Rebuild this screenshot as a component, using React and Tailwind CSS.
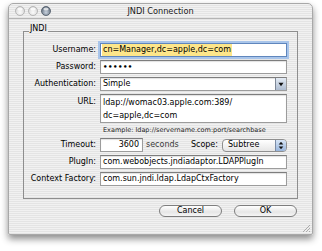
import React from "react";

const stripes =
  "bg-[repeating-linear-gradient(180deg,#f1f1f1_0px,#f1f1f1_1px,#e4e4e4_1px,#e4e4e4_2px)]";

function Light({ active }) {
  return (
    <svg width="10" height="10" viewBox="0 0 10 10">
      <defs>
        <radialGradient id={active ? "ga" : "gi"} cx="50%" cy="65%" r="60%">
          <stop offset="0%" stopColor={active ? "#c9d3df" : "#fbfbfb"} />
          <stop offset="100%" stopColor={active ? "#5e6b7b" : "#d6d6d6"} />
        </radialGradient>
      </defs>
      <circle cx="5" cy="5" r="4.5" fill={`url(#${active ? "ga" : "gi"})`} stroke={active ? "#4d5866" : "#a9a9a9"} strokeWidth="0.8" />
      <ellipse cx="5" cy="3" rx="2.6" ry="1.5" fill="#ffffff" opacity={active ? 0.7 : 0.8} />
    </svg>
  );
}

function Label({ children }) {
  return <div className="w-[76px] shrink-0 text-right pr-[4px] whitespace-nowrap">{children}</div>;
}

function Field({ children, className = "" }) {
  return (
    <div
      className={`h-[14px] bg-white border border-[#9c9c9c] border-t-[#7d7d7d] shadow-[inset_0_1px_1px_rgba(0,0,0,0.12)] flex items-center pl-[2px] whitespace-nowrap overflow-hidden ${className}`}
    >
      {children}
    </div>
  );
}

export default function App() {
  return (
    <div
      className="w-[322px] h-[251px] bg-white overflow-hidden pt-[3px] pl-[8px] text-[8px] text-black"
      style={{ fontFamily: '"DejaVu Sans", "Lucida Grande", sans-serif' }}
    >
      <div
        className={`w-[305px] h-[232px] rounded-t-[5px] rounded-b-[2px] border border-[#a8a8a8] shadow-[0_4px_7px_rgba(0,0,0,0.45)] flex flex-col ${stripes}`}
      >
        {/* title bar */}
        <div className="h-[15px] relative flex items-center border-b border-[#b4b4b4] shrink-0">
          <div className="absolute left-[6px] top-[2px] flex gap-[3px]">
            <Light />
            <Light />
            <Light active />
          </div>
          <div className="flex-1 text-center leading-[14px] text-[8.2px] text-[#1a1a1a]">JNDI Connection</div>
        </div>

        {/* content */}
        <div className="flex-1 flex flex-col px-[14px] pt-[5px]">
          <fieldset className="border border-[#8e8e8e] pr-[10px] pb-[12px] flex flex-col">
            <legend className="ml-[5px] px-[1px] leading-[10px] pb-[4px] text-[8px]">JNDI</legend>
            <div className="flex flex-col gap-[3px] pt-[5px]">
              <div className="flex items-center h-[14px]">
                <Label>Username:</Label>
                <div className="flex-1 h-[14px] bg-white border border-[#5f86bd] shadow-[0_0_0_2px_#a9c5ea] flex items-center pl-[1px] whitespace-nowrap overflow-hidden">
                  <span className="bg-[#fde68a] px-[1px] leading-[12px]">cn=Manager,dc=apple,dc=com</span>
                </div>
              </div>
              <div className="flex items-center h-[14px]">
                <Label>Password:</Label>
                <Field className="flex-1">
                  <span className="text-[7px] font-bold tracking-[0.5px]">••••••</span>
                </Field>
              </div>
              <div className="flex items-center h-[14px]">
                <Label>Authentication:</Label>
                <Field className="flex-1 pr-0">
                  <span className="flex-1">Simple</span>
                  <div className="w-[11px] h-[12px] border-l border-[#7d8796] bg-[linear-gradient(180deg,#e4ebf4,#aebcd0)] flex items-center justify-center">
                    <svg width="6" height="5" viewBox="0 0 6 5">
                      <path d="M0.5 0.8 L5.5 0.8 L3 4.3 Z" fill="#111" />
                    </svg>
                  </div>
                </Field>
              </div>
              <div className="flex items-start">
                <Label>
                  <div className="leading-[14px] pt-[1px]">URL:</div>
                </Label>
                <div className="flex-1 h-[29px] bg-white border border-[#9c9c9c] border-t-[#7d7d7d] shadow-[inset_0_1px_1px_rgba(0,0,0,0.12)] pl-[2px] pt-[1px] leading-[13px]">
                  <div>ldap://womac03.apple.com:389/</div>
                  <div>dc=apple,dc=com</div>
                </div>
              </div>
              <div className="flex items-center h-[9px]">
                <div className="w-[79px] shrink-0" />
                <div className="text-[6.5px] whitespace-nowrap text-[#222]">Example: ldap://servername.com:port/searchbase</div>
              </div>
              <div className="flex items-center h-[14px]">
                <Label>Timeout:</Label>
                <Field className="w-[43px] justify-end pr-[3px]">3600</Field>
                <span className="ml-[3px] text-[#3a3a3a]">seconds</span>
                <span className="ml-auto mr-[4px]">Scope:</span>
                <div className="w-[65px] h-[13px] rounded-[4px] border border-[#8f8f8f] bg-[linear-gradient(180deg,#ffffff,#e6e6e6)] flex items-center overflow-hidden">
                  <span className="flex-1 pl-[5px]">Subtree</span>
                  <div className="w-[11px] h-full border-l border-[#7b8ca6] bg-[linear-gradient(180deg,#d7e5f6,#98b5dc)] flex items-center justify-center">
                    <svg width="6" height="9" viewBox="0 0 6 9">
                      <path d="M3 0.8 L5.3 3.6 L0.7 3.6 Z" fill="#111" />
                      <path d="M3 8.2 L5.3 5.4 L0.7 5.4 Z" fill="#111" />
                    </svg>
                  </div>
                </div>
              </div>
              <div className="flex items-center h-[14px]">
                <Label>PlugIn:</Label>
                <Field className="flex-1">com.webobjects.jndiadaptor.LDAPPlugIn</Field>
              </div>
              <div className="flex items-center h-[14px]">
                <Label>Context Factory:</Label>
                <Field className="flex-1">com.sun.jndi.ldap.LdapCtxFactory</Field>
              </div>
            </div>
          </fieldset>

          <div className="flex justify-end gap-[12px] mt-[6px] pr-[1px]">
            <div className="w-[63px] h-[12px] rounded-full border border-[#7e7e7e] bg-[linear-gradient(180deg,#ffffff,#e6e6e6_60%,#f5f5f5)] flex items-center justify-center leading-none">Cancel</div>
            <div className="w-[63px] h-[12px] rounded-full border border-[#7e7e7e] bg-[linear-gradient(180deg,#ffffff,#e6e6e6_60%,#f5f5f5)] flex items-center justify-center leading-none">OK</div>
          </div>

          <div className="flex-1 flex items-end justify-end -mr-[13px] pb-[1px]">
            <svg width="9" height="9" viewBox="0 0 9 9">
              <path d="M8 1 L1 8 M8 4 L4 8 M8 7 L7 8" stroke="#9a9a9a" strokeWidth="0.8" />
            </svg>
          </div>
        </div>
      </div>
    </div>
  );
}
